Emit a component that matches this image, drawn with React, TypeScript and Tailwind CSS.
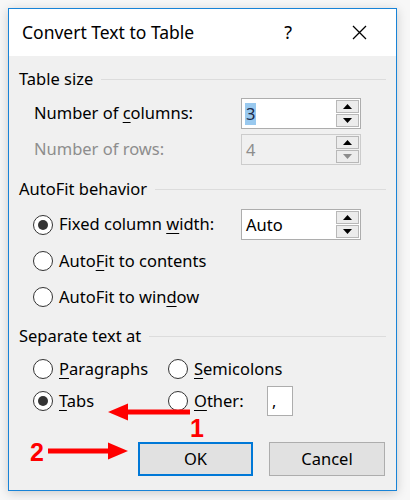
import React from "react";

const font = "font-['Segoe_UI','Noto_Sans',sans-serif]";

function Mn({ children }: { children: React.ReactNode }) {
  return <span className="underline decoration-1 underline-offset-[3px]">{children}</span>;
}

function GroupHeader({ label, mt }: { label: string; mt: string }) {
  return (
    <div className={`flex h-[24px] items-center gap-2 ${mt}`}>
      <span className="text-[16.5px] text-black">{label}</span>
      <div className="h-px flex-1 bg-[#dcdcdc]" />
    </div>
  );
}

function Spin({ value, disabled, selected }: { value: string; disabled?: boolean; selected?: boolean }) {
  const arrow = disabled ? "#8c8c8c" : "#000";
  return (
    <div
      className={`flex h-[31px] w-[120px] border ${
        disabled ? "border-[#cccccc] bg-[#f0f0f0]" : "border-[#adadad] bg-white"
      }`}
    >
      <div className="flex flex-1 items-center pl-[3px]">
        <span
          className={`px-px text-[16.5px] leading-[22px] ${
            selected ? "bg-[#99c9ef] text-[#1c2a4a]" : disabled ? "text-[#8d8d8d]" : "text-black"
          }`}
        >
          {value}
        </span>
      </div>
      <div className="flex w-[25px] flex-col gap-px p-px">
        <div className="flex flex-1 items-center justify-center border border-[#b8b8b8] bg-[#ececec]">
          <svg width="9" height="5" viewBox="0 0 9 5">
            <path d="M0 5 L4.5 0 L9 5 Z" fill="#000" />
          </svg>
        </div>
        <div className="flex flex-1 items-center justify-center border border-[#b8b8b8] bg-[#ececec]">
          <svg width="9" height="5" viewBox="0 0 9 5">
            <path d="M0 0 L4.5 5 L9 0 Z" fill={arrow} />
          </svg>
        </div>
      </div>
    </div>
  );
}

function Radio({ checked, children }: { checked?: boolean; children: React.ReactNode }) {
  return (
    <div className="flex items-center gap-[6px]">
      <div className="flex h-[20px] w-[20px] shrink-0 items-center justify-center rounded-full border-[1.5px] border-[#333333] bg-white">
        {checked && <div className="h-[10px] w-[10px] rounded-full bg-[#333333]" />}
      </div>
      <span className="whitespace-nowrap text-[16.5px] text-black">{children}</span>
    </div>
  );
}

export default function App() {
  return (
    <div className={`relative h-[500px] w-[410px] bg-[#f7f7f7] ${font}`}>
      <div className="absolute left-[8px] top-[8px] flex h-[483px] w-[389px] flex-col border border-[#1883d7] bg-[#f0f0f0] shadow-[0_2px_10px_rgba(0,0,0,0.18)]">
        <div className="flex h-[47px] items-center bg-white pl-[13px]">
          <span className="text-[17.5px] text-black">Convert Text to Table</span>
          <span className="ml-auto mr-[60px] text-[18px] text-black">?</span>
          <svg className="mr-[29px]" width="15" height="15" viewBox="0 0 15 15">
            <path d="M1 1 L14 14 M14 1 L1 14" stroke="#000" strokeWidth="1.3" />
          </svg>
        </div>

        <div className="flex flex-col px-[10px]">
          <GroupHeader label="Table size" mt="mt-[11px]" />
          <div className="mt-[7px] flex h-[31px] items-center pl-[15px]">
            <span className="w-[207px] text-[16.5px] text-black">
              Number of <Mn>c</Mn>olumns:
            </span>
            <Spin value="3" selected />
          </div>
          <div className="mt-[5px] flex h-[31px] items-center pl-[15px]">
            <span className="w-[207px] text-[16.5px] text-[#8d8d8d]">Number of rows:</span>
            <Spin value="4" disabled />
          </div>

          <GroupHeader label="AutoFit behavior" mt="mt-[12px]" />
          <div className="mt-[8px] flex h-[31px] items-center pl-[14px]">
            <div className="w-[208px]">
              <Radio checked>
                Fixed column <Mn>w</Mn>idth:
              </Radio>
            </div>
            <Spin value="Auto" />
          </div>
          <div className="mt-[9px] flex h-[24px] items-center pl-[14px]">
            <Radio>
              Auto<Mn>F</Mn>it to contents
            </Radio>
          </div>
          <div className="mt-[12px] flex h-[24px] items-center pl-[14px]">
            <Radio>
              AutoFit to win<Mn>d</Mn>ow
            </Radio>
          </div>

          <GroupHeader label="Separate text at" mt="mt-[15px]" />
          <div className="mt-[9px] flex h-[24px] items-center pl-[14px]">
            <div className="w-[135px]">
              <Radio>
                <Mn>P</Mn>aragraphs
              </Radio>
            </div>
            <Radio>
              <Mn>S</Mn>emicolons
            </Radio>
          </div>
          <div className="mt-[5px] flex h-[30px] items-center pl-[14px]">
            <div className="w-[135px]">
              <Radio checked>
                <Mn>T</Mn>abs
              </Radio>
            </div>
            <div className="w-[99px]">
              <Radio>
                <Mn>O</Mn>ther:
              </Radio>
            </div>
            <div className="flex h-[30px] w-[26px] items-start border border-[#adadad] bg-white pl-[4px] pt-[2px] text-[16px] text-black">
              ,
            </div>
          </div>

          <div className="mt-[26px] flex justify-end gap-[16px] pr-[1px]">
            <button className="flex h-[34px] w-[115px] items-center justify-center border-2 border-[#0078d7] bg-[#e1e1e1] text-[16.5px] text-black">
              OK
            </button>
            <button className="flex h-[34px] w-[116px] items-center justify-center border border-[#adadad] bg-[#e1e1e1] text-[16.5px] text-black">
              Cancel
            </button>
          </div>
        </div>
      </div>

      <svg className="absolute left-[108px] top-[402px]" width="82" height="20" viewBox="0 0 82 20">
        <path d="M16 10 L82 10" stroke="#ff0000" strokeWidth="5" />
        <path d="M0 10 L20 1.5 L20 18.5 Z" fill="#ff0000" />
      </svg>
      <svg className="absolute left-[48px] top-[441px]" width="80" height="20" viewBox="0 0 80 20">
        <path d="M0 10 L64 10" stroke="#ff0000" strokeWidth="5" />
        <path d="M80 10 L60 1.5 L60 18.5 Z" fill="#ff0000" />
      </svg>
      <span className="absolute left-[190px] top-[413px] font-['Liberation_Sans',sans-serif] text-[25px] font-bold leading-[30px] text-[#ff0000]">
        1
      </span>
      <span className="absolute left-[30px] top-[437px] font-['Liberation_Sans',sans-serif] text-[25px] font-bold leading-[30px] text-[#ff0000]">
        2
      </span>
    </div>
  );
}
